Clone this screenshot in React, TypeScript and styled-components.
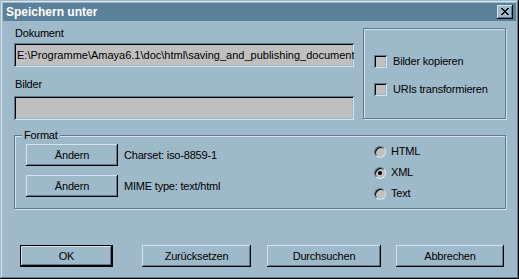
import React from 'react';
import styled, { createGlobalStyle } from 'styled-components';

const face = '#9eb9c9';
const light = '#d4e4ee';
const shadow = '#5b7b8f';
const dark = '#000000';
const field = '#c0c0c0';
const caption = '#5a809a';

const GlobalStyle = createGlobalStyle`
  html, body {
    margin: 0;
    padding: 0;
    background: ${face};
  }
  body {
    font-family: 'Liberation Sans', Arial, sans-serif;
    font-size: 11px;
    line-height: 13px;
    letter-spacing: -0.2px;
    color: #000;
  }
`;

const Window = styled('div')`
  box-sizing: border-box;
  width: 519px;
  height: 279px;
  padding: 3px;
  background: ${face};
  box-shadow: inset -1px -1px ${dark}, inset 1px 1px ${face},
    inset -2px -2px ${shadow}, inset 2px 2px ${light};
  display: flex;
  flex-direction: column;
`;

const TitleBar = styled('div')`
  height: 18px;
  background: ${caption};
  display: flex;
  align-items: center;
  justify-content: space-between;
  padding: 0 3px;
`;

const Title = styled('span')`
  color: #fff;
  font-weight: bold;
  font-size: 12px;
  line-height: 18px;
  letter-spacing: 0;
`;

const CloseButton = styled('div')`
  width: 16px;
  height: 14px;
  background: ${face};
  box-shadow: inset -1px -1px ${dark}, inset 1px 1px ${light},
    inset -2px -2px ${shadow};
  display: flex;
  align-items: center;
  justify-content: center;
  svg {
    margin: -1px 0 0 -1px;
  }
`;

const Body = styled('div')`
  flex: 1;
  display: flex;
  flex-direction: column;
  padding: 0 10px 0 11px;
`;

const TopRow = styled('div')`
  display: flex;
  gap: 9px;
  margin-top: 6px;
`;

const FieldColumn = styled('div')`
  width: 340px;
  display: flex;
  flex-direction: column;
`;

const Label = styled('div')<{ $top: number; $gap: number }>`
  margin-top: ${(p) => p.$top}px;
  margin-bottom: ${(p) => p.$gap}px;
  padding-left: 1px;
`;

const TextField = styled('div')`
  box-sizing: border-box;
  height: 24px;
  background: ${field};
  padding: 0 3px;
  display: flex;
  align-items: center;
  white-space: nowrap;
  overflow: hidden;
  letter-spacing: 0;
  box-shadow: inset 1px 1px ${shadow}, inset -1px -1px ${light},
    inset 2px 2px ${dark}, inset -2px -2px ${face};
`;

const Group = styled('div')`
  box-sizing: border-box;
  position: relative;
  border: 1px solid ${shadow};
  box-shadow: inset 1px 1px ${light}, 1px 1px ${light};
`;

const OptionsGroup = styled(Group)`
  width: 143px;
  height: 91px;
  margin-top: 1px;
  padding: 26px 0 0 10px;
  display: flex;
  flex-direction: column;
  gap: 15px;
`;

const CheckRow = styled('label')`
  display: flex;
  align-items: center;
  gap: 6px;
  height: 13px;
`;

const CheckBox = styled('span')`
  box-sizing: border-box;
  width: 13px;
  height: 13px;
  background: ${field};
  box-shadow: inset 1px 1px ${shadow}, inset -1px -1px ${light},
    inset 2px 2px ${dark}, inset -2px -2px ${face};
`;

const FormatGroup = styled(Group)`
  margin-top: 15px;
  height: 74px;
  padding: 8px 0 0 11px;
  display: flex;
  align-items: flex-start;
`;

const Legend = styled('span')`
  position: absolute;
  top: -7px;
  left: 7px;
  padding: 0 2px;
  background: ${face};
`;

const ActionColumn = styled('div')`
  display: flex;
  flex-direction: column;
  gap: 9px;
`;

const ActionRow = styled('div')`
  display: flex;
  align-items: center;
  gap: 6px;
`;

const Button = styled('div')<{ $w: number; $default?: boolean }>`
  box-sizing: border-box;
  width: ${(p) => p.$w}px;
  height: 22px;
  display: flex;
  align-items: center;
  justify-content: center;
  background: ${face};
  box-shadow: ${(p) =>
    p.$default
      ? `inset 0 0 0 1px ${dark}, inset -2px -2px ${dark}, inset 2px 2px ${light}, inset -3px -3px ${shadow}`
      : `inset -1px -1px ${dark}, inset 1px 1px ${light}, inset -2px -2px ${shadow}`};
`;

const RadioColumn = styled('div')`
  margin-left: auto;
  width: 131px;
  margin-top: -3px;
  display: flex;
  flex-direction: column;
`;

const RadioRow = styled('label')`
  height: 21px;
  display: flex;
  align-items: center;
  gap: 5px;
`;

const Radio = styled('span')<{ $checked?: boolean }>`
  box-sizing: border-box;
  width: 12px;
  height: 12px;
  border-radius: 50%;
  border: 1px solid;
  border-color: ${shadow} ${light} ${light} ${shadow};
  background: ${field};
  box-shadow: inset 1px 1px ${dark};
  display: flex;
  align-items: center;
  justify-content: center;
  &::after {
    content: '';
    display: ${(p) => (p.$checked ? 'block' : 'none')};
    width: 4px;
    height: 4px;
    border-radius: 50%;
    background: ${dark};
  }
`;

const ButtonRow = styled('div')`
  display: flex;
  margin-top: 36px;
  padding-left: 6px;
`;

const Spacer = styled('div')<{ $w: number }>`
  width: ${(p) => p.$w}px;
`;

const CloseIcon = () => (
  <svg width="8" height="7" viewBox="0 0 8 7" shapeRendering="crispEdges">
    <path
      d="M0 0h2v1H0zM6 0h2v1H6zM1 1h2v1H1zM5 1h2v1H5zM2 2h4v1H2zM3 3h2v1H3zM2 4h4v1H2zM1 5h2v1H1zM5 5h2v1H5zM0 6h2v1H0zM6 6h2v1H6z"
      fill="#000"
    />
  </svg>
);

export default function App() {
  return (
    <>
      <GlobalStyle />
      <Window>
        <TitleBar>
          <Title>Speichern unter</Title>
          <CloseButton>
            <CloseIcon />
          </CloseButton>
        </TitleBar>
        <Body>
          <TopRow>
            <FieldColumn>
              <Label $top={0} $gap={3}>Dokument</Label>
              <TextField>
                E:\Programme\Amaya6.1\doc\html\saving_and_publishing_document
              </TextField>
              <Label $top={11} $gap={5}>Bilder</Label>
              <TextField />
            </FieldColumn>
            <OptionsGroup>
              <CheckRow>
                <CheckBox />
                Bilder kopieren
              </CheckRow>
              <CheckRow>
                <CheckBox />
                URIs transformieren
              </CheckRow>
            </OptionsGroup>
          </TopRow>
          <FormatGroup>
            <Legend>Format</Legend>
            <ActionColumn>
              <ActionRow>
                <Button $w={92}>Ändern</Button>
                Charset: iso-8859-1
              </ActionRow>
              <ActionRow>
                <Button $w={92}>Ändern</Button>
                MIME type: text/html
              </ActionRow>
            </ActionColumn>
            <RadioColumn>
              <RadioRow>
                <Radio />
                HTML
              </RadioRow>
              <RadioRow>
                <Radio $checked />
                XML
              </RadioRow>
              <RadioRow>
                <Radio />
                Text
              </RadioRow>
            </RadioColumn>
          </FormatGroup>
          <ButtonRow>
            <Button $w={93} $default>
              OK
            </Button>
            <Spacer $w={29} />
            <Button $w={109}>Zurücksetzen</Button>
            <Spacer $w={16} />
            <Button $w={114}>Durchsuchen</Button>
            <Spacer $w={15} />
            <Button $w={108}>Abbrechen</Button>
          </ButtonRow>
        </Body>
      </Window>
    </>
  );
}
